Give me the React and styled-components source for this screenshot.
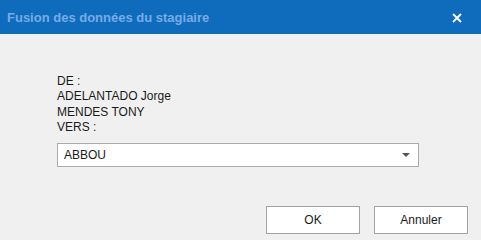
import React, { useState } from "react";
import styled, { createGlobalStyle } from "styled-components";

const GlobalStyle = createGlobalStyle`
    html, body {
        margin: 0;
        padding: 0;
        background: #f0f0f0;
    }
    body {
        font-family: "Liberation Sans", Arial, sans-serif;
    }
`;

function CloseIcon() {
    return (
        <svg width="10" height="10" viewBox="0 0 10 10">
            <path d="M1 1 L9 9 M9 1 L1 9" stroke="#fff" strokeWidth="1.8" fill="none" />
        </svg>
    );
}

function App() {
    const [target] = useState("ABBOU");
    const sources = ["ADELANTADO Jorge", "MENDES TONY"];

    return (
        <>
            <GlobalStyle />
            <Dialog>
                <TitleBar>
                    <Title>Fusion des données du stagiaire</Title>
                    <CloseButton>
                        <CloseIcon />
                    </CloseButton>
                </TitleBar>
                <Body>
                    <Lines>
                        <Line>DE :</Line>
                        {sources.map((s) => (
                            <Line key={s}>{s}</Line>
                        ))}
                        <Line>VERS :</Line>
                    </Lines>
                    <Select>
                        <span>{target}</span>
                        <Arrow />
                    </Select>
                </Body>
                <Footer>
                    <Button>OK</Button>
                    <Button>Annuler</Button>
                </Footer>
            </Dialog>
        </>
    );
}

const Dialog = styled.div`
    width: 481px;
    height: 240px;
    display: flex;
    flex-direction: column;
    background: #f0f0f0;
    overflow: hidden;
`;

const TitleBar = styled.div`
    height: 34px;
    display: flex;
    align-items: center;
    justify-content: space-between;
    padding: 0 0 0 7px;
    background: #0f6cbd;
    flex-shrink: 0;
`;

const Title = styled.div`
    font-size: 13px;
    font-weight: bold;
    color: #78abe6;
    padding-top: 1px;
`;

const CloseButton = styled.div`
    height: 34px;
    display: flex;
    align-items: center;
    margin-right: 19px;
    padding-top: 1px;
`;

const Body = styled.div`
    padding: 40px 0 0 57px;
`;

const Lines = styled.div`
    display: flex;
    flex-direction: column;
`;

const Line = styled.div`
    font-size: 12px;
    line-height: 15.4px;
    color: #1a1a1a;
`;

const Select = styled.div`
    margin-top: 7px;
    width: 362px;
    height: 24px;
    box-sizing: border-box;
    border: 1px solid #ababab;
    background: #fff;
    display: flex;
    align-items: center;
    justify-content: space-between;
    padding: 1px 8px 0 6px;
    font-size: 12px;
    color: #1a1a1a;
`;

const Arrow = styled.div`
    width: 0;
    height: 0;
    border-left: 4px solid transparent;
    border-right: 4px solid transparent;
    border-top: 4px solid #555;
`;

const Footer = styled.div`
    display: flex;
    justify-content: flex-end;
    gap: 14px;
    padding: 39px 13px 0 0;
`;

const Button = styled.div`
    width: 94px;
    height: 28px;
    box-sizing: border-box;
    border: 1px solid #a3a3a3;
    background: #fff;
    display: flex;
    align-items: center;
    justify-content: center;
    font-size: 12px;
    color: #1a1a1a;
`;

export default App;
